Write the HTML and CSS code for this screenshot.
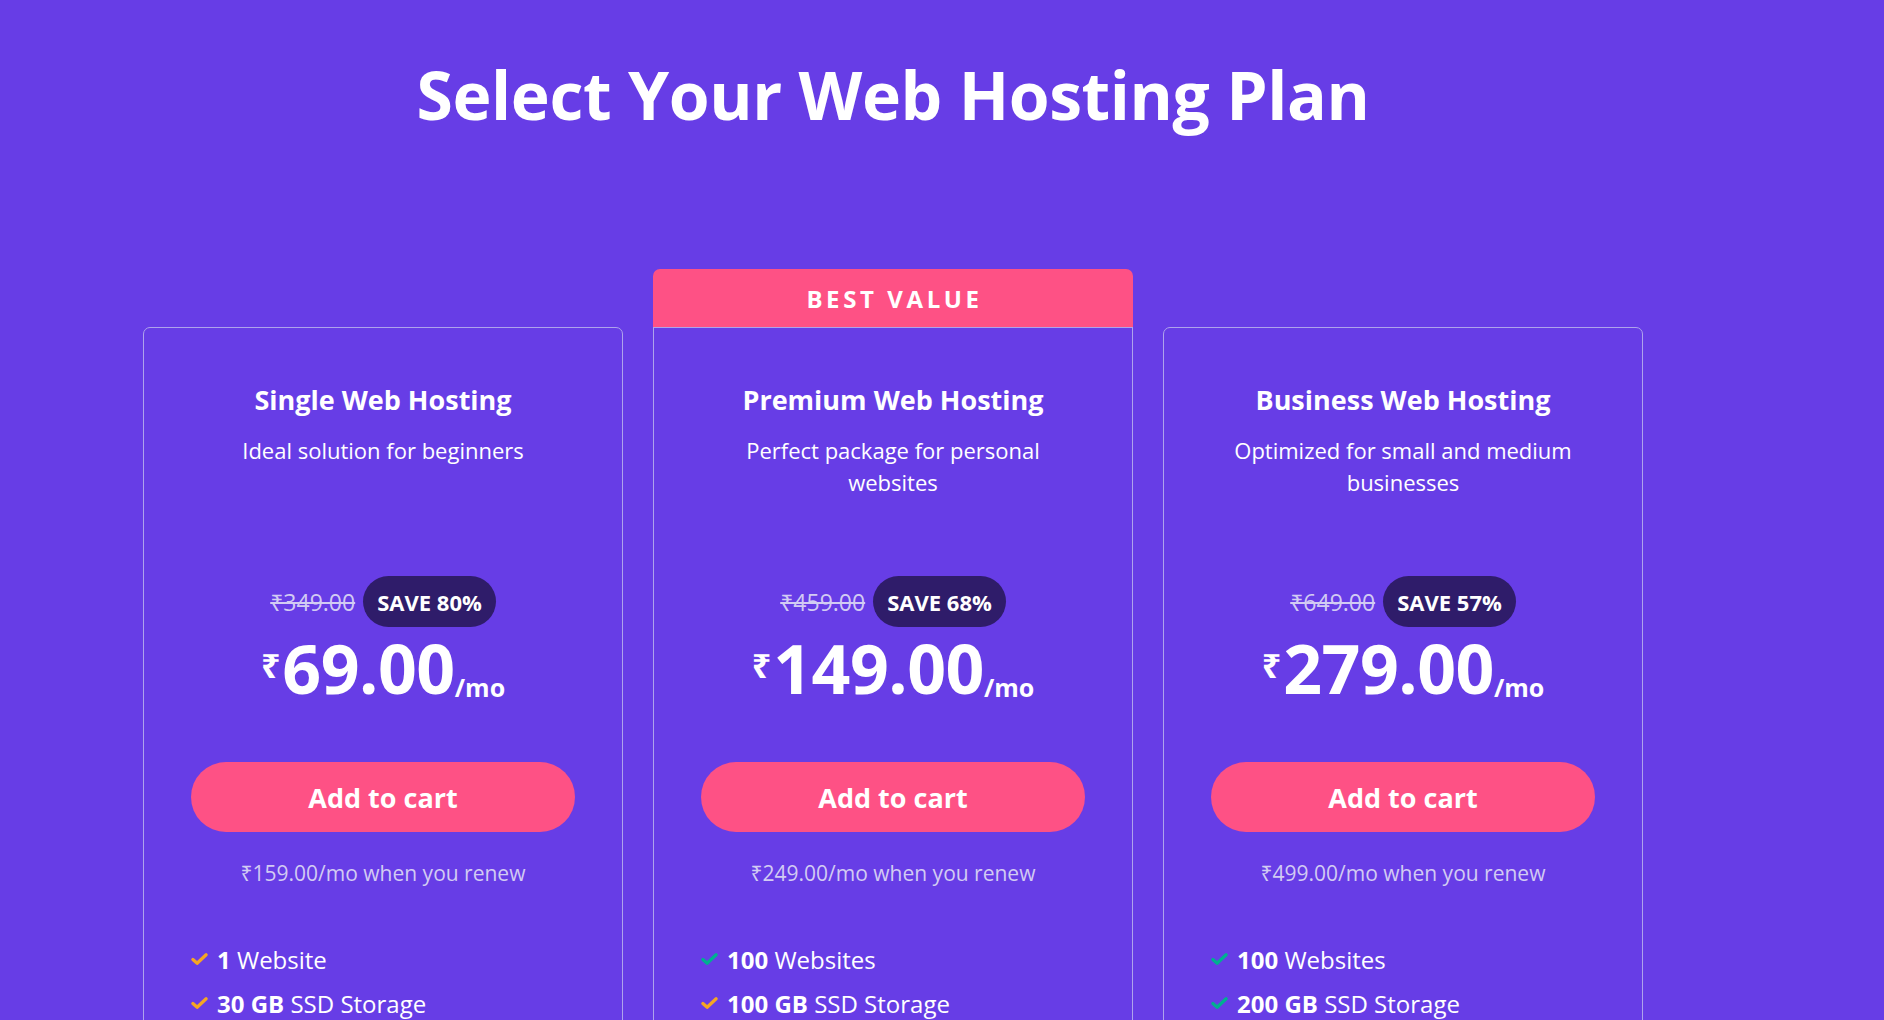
FILE: index.html
```html
<!DOCTYPE html>
<html lang="en">
<head>
<meta charset="utf-8">
<title>Select Your Web Hosting Plan</title>
<link rel="stylesheet" href="styles.css">
</head>
<body>
<main class="page">
  <h1 class="heading">Select Your Web Hosting Plan</h1>
  <div class="plans">
    <section class="plan">
      <div class="plan-spacer"></div>
      <div class="card">
        <h2 class="card-title">Single Web Hosting</h2>
        <p class="card-desc">Ideal solution for beginners</p>
        <div class="old-row"><span class="old-price">₹349.00</span><span class="save">SAVE 80%</span></div>
        <div class="price"><span class="cur">₹</span><span class="amount">69.00</span><span class="per">/mo</span></div>
        <button class="cart">Add to cart</button>
        <p class="renew">₹159.00/mo when you renew</p>
        <ul class="features">
          <li><svg class="check orange" viewBox="0 0 18 14"><path d="M2 7.5 L6.5 11.5 L16 2.5"/></svg><span><b>1</b> Website</span></li>
          <li><svg class="check orange" viewBox="0 0 18 14"><path d="M2 7.5 L6.5 11.5 L16 2.5"/></svg><span><b>30 GB</b> SSD Storage</span></li>
        </ul>
      </div>
    </section>
    <section class="plan">
      <div class="ribbon">BEST VALUE</div>
      <div class="card card-featured">
        <h2 class="card-title">Premium Web Hosting</h2>
        <p class="card-desc">Perfect package for personal websites</p>
        <div class="old-row"><span class="old-price">₹459.00</span><span class="save">SAVE 68%</span></div>
        <div class="price"><span class="cur">₹</span><span class="amount">149.00</span><span class="per">/mo</span></div>
        <button class="cart">Add to cart</button>
        <p class="renew">₹249.00/mo when you renew</p>
        <ul class="features">
          <li><svg class="check green" viewBox="0 0 18 14"><path d="M2 7.5 L6.5 11.5 L16 2.5"/></svg><span><b>100</b> Websites</span></li>
          <li><svg class="check orange" viewBox="0 0 18 14"><path d="M2 7.5 L6.5 11.5 L16 2.5"/></svg><span><b>100 GB</b> SSD Storage</span></li>
        </ul>
      </div>
    </section>
    <section class="plan">
      <div class="plan-spacer"></div>
      <div class="card">
        <h2 class="card-title">Business Web Hosting</h2>
        <p class="card-desc">Optimized for small and medium businesses</p>
        <div class="old-row"><span class="old-price">₹649.00</span><span class="save">SAVE 57%</span></div>
        <div class="price"><span class="cur">₹</span><span class="amount">279.00</span><span class="per">/mo</span></div>
        <button class="cart">Add to cart</button>
        <p class="renew">₹499.00/mo when you renew</p>
        <ul class="features">
          <li><svg class="check green" viewBox="0 0 18 14"><path d="M2 7.5 L6.5 11.5 L16 2.5"/></svg><span><b>100</b> Websites</span></li>
          <li><svg class="check green" viewBox="0 0 18 14"><path d="M2 7.5 L6.5 11.5 L16 2.5"/></svg><span><b>200 GB</b> SSD Storage</span></li>
        </ul>
      </div>
    </section>
  </div>
</main>
</body>
</html>
```

FILE: styles.css
```css
* { box-sizing: border-box; }

html, body {
  margin: 0;
  padding: 0;
  height: 100%;
  overflow: hidden;
}

body {
  background: #673de6;
  color: #ffffff;
  font-family: "Open Sans", "Noto Sans", "Liberation Sans", sans-serif;
}

.page {
  width: 1500px;
  margin-left: 143px;
  padding-top: 46px;
}

.heading {
  margin: 0;
  text-align: center;
  font-size: 66px;
  line-height: 96px;
  font-weight: 700;
  letter-spacing: -0.4px;
}

.plans {
  display: flex;
  gap: 30px;
  margin-top: 127px;
}

.plan {
  width: 480px;
  display: flex;
  flex-direction: column;
}

.plan-spacer {
  height: 58px;
}

.ribbon {
  height: 58px;
  background: #fe5185;
  border-radius: 7px 7px 0 0;
  display: flex;
  align-items: center;
  justify-content: center;
  padding-left: 3px;
  font-size: 24px;
  font-weight: 700;
  letter-spacing: 3.6px;
}

.card {
  border: 1px solid #aea3ec;
  border-radius: 7px;
  padding: 55px 47px 0;
  height: 900px;
  display: flex;
  flex-direction: column;
  align-items: center;
}

.card-featured {
  border-radius: 0;
}

.card-title {
  margin: 0;
  font-size: 27px;
  line-height: 34px;
  font-weight: 700;
  text-align: center;
}

.card-desc {
  margin: 17px 0 0;
  width: 360px;
  min-height: 142px;
  font-size: 22px;
  line-height: 32px;
  text-align: center;
}

.old-row {
  display: flex;
  align-items: center;
  gap: 8px;
  height: 51px;
}

.old-price {
  font-size: 23px;
  color: #d2cbf3;
  text-decoration: line-through;
}

.save {
  height: 51px;
  padding: 0 14px;
  border-radius: 26px;
  background: #2f1c6a;
  display: flex;
  align-items: center;
  font-size: 22px;
  font-weight: 700;
}

.price {
  display: flex;
  align-items: baseline;
  margin-top: 1px;
  height: 80px;
  line-height: 80px;
  font-weight: 700;
}

.cur {
  font-size: 34px;
  align-self: flex-start;
  line-height: 1;
  margin-top: 20px;
  margin-right: 2px;
}

.amount {
  font-size: 68px;
  letter-spacing: -0.5px;
}

.per {
  font-size: 25px;
  position: relative;
  top: 3px;
}

.cart {
  margin-top: 54px;
  width: 100%;
  height: 70px;
  border: 0;
  border-radius: 35px;
  background: #fe5185;
  color: #ffffff;
  font-family: inherit;
  font-size: 27px;
  font-weight: 700;
  cursor: pointer;
}

.renew {
  margin: 26px 0 0;
  font-size: 21px;
  line-height: 30px;
  color: #d2cbf3;
}

.features {
  list-style: none;
  margin: 49px 0 0;
  padding: 0;
  align-self: stretch;
}

.features li {
  display: flex;
  align-items: center;
  gap: 9px;
  height: 44px;
  font-size: 24px;
}

.features b {
  font-weight: 700;
}

.check {
  width: 17px;
  height: 14px;
  flex: none;
  fill: none;
  stroke-width: 3.4;
  stroke-linecap: round;
  stroke-linejoin: round;
}

.check.orange { stroke: #f5a623; }
.check.green { stroke: #00b090; }
```
